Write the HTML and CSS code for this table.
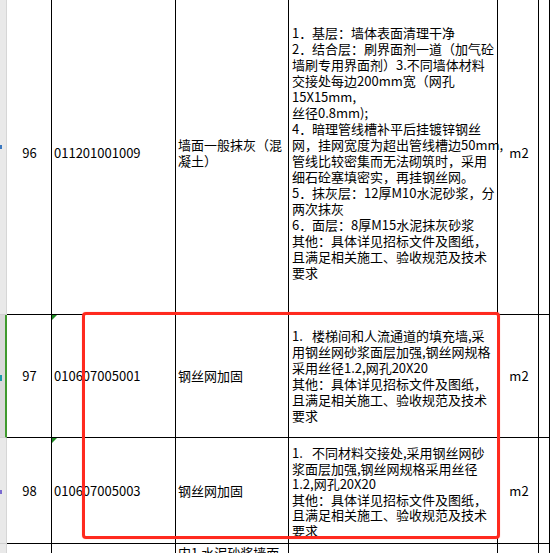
FILE: index.html
```html
<!DOCTYPE html>
<html lang="zh-CN">
<head>
<meta charset="utf-8">
<title>清单</title>
<link rel="stylesheet" href="styles.css">
</head>
<body>
<div class="sheet">
  <div class="gutter"><i class="hdr hdr96"></i></div>
  <div class="c num">96</div>
  <div class="c code">011201001009</div>
  <div class="c name"><div>墙面一般抹灰（混</div><div>凝土）</div></div>
  <div class="c desc">
    <div><span class="ld">1．</span>基层：墙体表面清理干净</div>
    <div><span class="ld">2．</span>结合层：刷界面剂一道（加气砼</div>
    <div>墙刷专用界面剂）3.不同墙体材料</div>
    <div>交接处每边200mm宽（网孔</div>
    <div>15X15mm,</div>
    <div>丝径0.8mm);</div>
    <div><span class="ld">4．</span>暗理管线槽补平后挂镀锌钢丝</div>
    <div>网，挂网宽度为超出管线槽边50mm,</div>
    <div>管线比较密集而无法砌筑时，采用</div>
    <div>细石砼塞填密实，再挂钢丝网。</div>
    <div><span class="ld">5．</span>抹灰层：12厚M10水泥砂浆，分</div>
    <div>两次抹灰</div>
    <div><span class="ld">6．</span>面层：8厚M15水泥抹灰砂浆</div>
    <div>其他：具体详见招标文件及图纸，</div>
    <div>且满足相关施工、验收规范及技术</div>
    <div>要求</div>
  </div>
  <div class="c unit">m2</div>
  <div class="c extra"></div>

  <div class="gutter sel"><i class="hdr hdr97"></i></div>
  <div class="c num">97</div>
  <div class="c code flag">010607005001</div>
  <div class="c name"><div>钢丝网加固</div></div>
  <div class="c desc">
    <div><span class="ld">1.</span>楼梯间和人流通道的填充墙,采</div>
    <div>用钢丝网砂浆面层加强,钢丝网规格</div>
    <div>采用丝径1.2,网孔20X20</div>
    <div>其他：具体详见招标文件及图纸，</div>
    <div>且满足相关施工、验收规范及技术</div>
    <div>要求</div>
  </div>
  <div class="c unit">m2</div>
  <div class="c extra"></div>

  <div class="gutter"><i class="hdr hdr98"></i></div>
  <div class="c num">98</div>
  <div class="c code flag">010607005003</div>
  <div class="c name"><div>钢丝网加固</div></div>
  <div class="c desc tight">
    <div><span class="ld">1.</span>不同材料交接处,采用钢丝网砂</div>
    <div>浆面层加强,钢丝网规格采用丝径</div>
    <div>1.2,网孔20X20</div>
    <div>其他：具体详见招标文件及图纸，</div>
    <div>且满足相关施工、验收规范及技术</div>
    <div>要求</div>
  </div>
  <div class="c unit">m2</div>
  <div class="c extra"></div>

  <div class="gutter"></div>
  <div class="c num top"></div>
  <div class="c code top"></div>
  <div class="c name top"><div>内1 水泥砂浆墙面</div></div>
  <div class="c desc top"></div>
  <div class="c unit top"></div>
  <div class="c extra"></div>
</div>
<div class="mark"></div>
</body>
</html>
```
FILE: styles.css
```css
html, body {
  margin: 0;
  padding: 0;
  background: #fff;
}
body {
  width: 550px;
  height: 553px;
  overflow: hidden;
  position: relative;
  font-family: "Noto Sans CJK SC", "Noto Sans", sans-serif;
  font-size: 13px;
  color: #000;
}
.sheet {
  display: grid;
  grid-template-columns: 7px 45px 124px 113px 209px 41px 1fr;
  grid-template-rows: 324px 123px 106px 80px;
  margin-top: -9px;
}
.gutter {
  background: #e9e9e9;
  border-right: 1px solid #d6d6d6;
  border-bottom: 1px solid #d0d0d0;
  box-sizing: border-box;
  display: flex;
  align-items: center;
}
.gutter.sel {
  background: #d9d9d9;
  border-right: 2px solid #3f9a2e;
}
.hdr {
  display: block;
  width: 2px;
  height: 4px;
  background: #3a78c0;
}
.hdr96 { margin-top: -12px; }
.hdr97 { background: #1a9aa8; height: 6px; margin-top: 4px; }
.hdr98 { background: #7a6ad0; margin-top: 2px; }
.c {
  box-sizing: border-box;
  border-right: 1px solid #000;
  border-bottom: 1px solid #000;
  display: flex;
  flex-direction: column;
  justify-content: center;
  line-height: 16px;
  white-space: nowrap;
  position: relative;
}
.num {
  align-items: center;
  padding-left: 1px;
}
.code {
  padding-left: 2px;
}
.name {
  padding-left: 2px;
}
.desc {
  padding-left: 3px;
}
.desc.tight {
  line-height: 15.5px;
  padding-top: 2px;
}
.ld {
  display: inline-block;
  width: 20px;
}
.unit {
  align-items: center;
  padding-left: 2px;
}
.top {
  justify-content: flex-start;
  padding-top: 1px;
}
.flag::before {
  content: "";
  position: absolute;
  left: 0;
  top: 0;
  width: 0;
  height: 0;
  border-top: 5px solid #1f8a24;
  border-right: 5px solid transparent;
}
.mark {
  position: absolute;
  left: 82px;
  top: 312px;
  width: 418px;
  height: 227px;
  box-sizing: border-box;
  border: 3px solid #ff2a1f;
  border-radius: 4px;
  box-shadow: 0 0 1px rgba(255, 90, 90, 0.7);
}
```
